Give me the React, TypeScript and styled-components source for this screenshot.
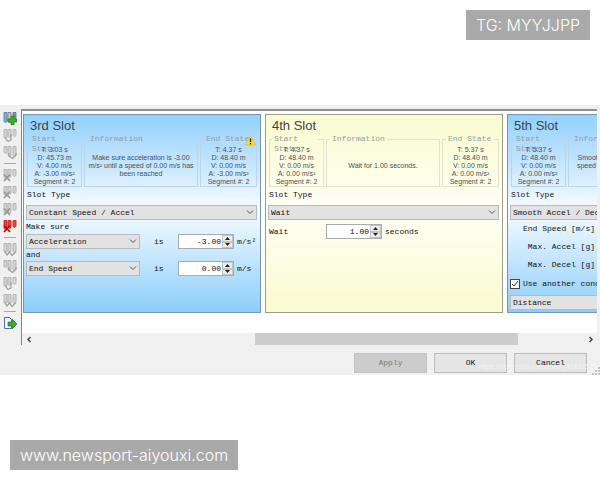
import React from "react";
import styled, { createGlobalStyle } from "styled-components";

const mono = `"Liberation Mono", monospace`;
const sans = `"Liberation Sans", Arial, sans-serif`;

const GlobalStyle = createGlobalStyle`
  * { box-sizing: border-box; }
  body { margin: 0; background: #fff; overflow-x: hidden; }
`;

type Tone = "blue" | "cream";

const Page = styled.main`
  min-height: 100vh;
  display: flex;
  flex-direction: column;
  font: 8px/10px ${mono};
  color: #111;
`;

const TagRow = styled.div<{ $end?: boolean }>`
  display: flex;
  justify-content: ${(p) => (p.$end ? "flex-end" : "flex-start")};
  padding: 10px;
`;

const Tag = styled.div`
  background: #a9a9a9;
  color: #fff;
  font: 300 16px/30px Inter, sans-serif;
  padding: 0 10px;
`;

const Dialog = styled.section`
  margin: 55px 0;
  padding: 4px 3px 0 0;
  background: #f0f0f0;
`;

const Body = styled.div`
  display: flex;
`;

const Toolbar = styled.nav`
  flex: none;
  width: 21px;
  display: flex;
  flex-direction: column;
  align-items: stretch;
`;

const ToolButton = styled.button`
  display: flex;
  align-items: center;
  justify-content: center;
  height: 17px;
  padding: 0 2px 0 0;
  border: 0;
  background: none;
`;

const Divider = styled.hr`
  width: 12px;
  height: 1px;
  margin: 3px 4px 2px;
  border: 0;
  background: #a8a8a8;
`;

const Panel = styled.div`
  flex: 1;
  min-width: 0;
  border-left: 1px solid #858585;
  border-top: 2px solid #929292;
  background: #fff;
`;

const Cards = styled.div`
  display: flex;
  gap: 4px;
  padding: 3px 0 20px 1px;
  overflow: hidden;
`;

const Card = styled.article<{ $tone: Tone }>`
  flex: none;
  width: 238px;
  height: 199px;
  padding: 3px 3px 0 2px;
  border: 1px solid ${(p) => (p.$tone === "blue" ? "#7496b0" : "#9a9b88")};
  background: ${(p) =>
    p.$tone === "blue"
      ? "linear-gradient(#93d1fd, #bfe3fd 22%, #f4faff 46%, #e9f6ff 55%, #b5dffc 80%, #8bcefb)"
      : "linear-gradient(#fafbd0, #fdfde2 25%, #fefef4 46%, #fefeec 60%, #fafbd0)"};
`;

const Title = styled.h2`
  margin: 0 0 0 4px;
  font: 13px/16px ${sans};
  color: #3a444b;
`;

const Groups = styled.div`
  display: grid;
  grid-template-columns: 55px 1fr 57px;
  gap: 2px;
  margin-left: 1px;
`;

const Group = styled.fieldset<{ $tone: Tone }>`
  position: relative;
  min-width: 0;
  height: 53px;
  margin: 0;
  padding: 0;
  border: 1px solid ${(p) => (p.$tone === "blue" ? "#b9d7e8" : "#e2e3cf")};
  font: 7px/8px ${sans};
  color: #46525a;
  text-align: center;
`;

const Legend = styled.legend`
  height: 10px;
  max-width: 46px;
  margin-left: 2px;
  padding: 0 2px;
  font: 8px/10px ${mono};
  color: #969d9c;
  text-align: left;
`;

const WideLegend = styled(Legend)`
  max-width: none;
  margin-left: 3px;
  white-space: nowrap;
`;

const Info = styled.div`
  display: flex;
  align-items: center;
  justify-content: center;
  height: 44px;
  padding: 0 3px;
  white-space: pre-line;
`;

const States = styled.div`
  padding-top: 2px;
  white-space: nowrap;
`;

const Warning = styled.svg`
  position: absolute;
  right: 0;
  top: -9px;
`;

const Caption = styled.div<{ $first?: boolean }>`
  height: ${(p) => (p.$first ? "14px" : "12px")};
  line-height: ${(p) => (p.$first ? "14px" : "12px")};
`;

const SlotLabel = styled.label`
  display: block;
  height: 18px;
  padding-left: 1px;
  line-height: 16px;
`;

const SelectWrap = styled.div<{ $short?: boolean }>`
  position: relative;
  width: ${(p) => (p.$short ? "114px" : "100%")};
  flex: none;

  select {
    display: block;
    width: 100%;
    height: 15px;
    padding: 0 14px 0 2px;
    appearance: none;
    border: 1px solid #b7bbbd;
    border-radius: 0;
    background: #e2e2e2;
    color: #111;
    font: 8px/12px ${mono};
  }

  svg {
    position: absolute;
    right: 3px;
    top: 5px;
    pointer-events: none;
  }
`;

const Row = styled.div`
  display: flex;
  align-items: center;
`;

const Is = styled.span`
  margin-left: 14px;
  width: 24px;
`;

const WaitRow = styled(Row)`
  margin-top: 4px;
  padding-left: 1px;

  label {
    width: 57px;
  }
`;

const Spin = styled.div`
  display: flex;
  width: 56px;
  height: 15px;
  border: 1px solid #a5adb2;
  background: #fff;
  margin-right: 3px;

  input {
    flex: 1;
    min-width: 0;
    padding: 0 1px;
    border: 0;
    background: none;
    text-align: right;
    color: #111;
    font: 8px/10px ${mono};
  }
`;

const Arrows = styled.div`
  display: flex;
  flex-direction: column;
  width: 11px;

  button {
    flex: 1;
    display: flex;
    align-items: center;
    justify-content: center;
    padding: 0;
    min-height: 0;
    border: 1px solid #c4c4c4;
    background: #ececec;
  }
`;

const Params = styled.div`
  display: grid;
  grid-auto-rows: 18px;
  grid-template-columns: 85px 1fr;
  align-items: center;
  column-gap: 6px;
  text-align: right;
  white-space: nowrap;

  input {
    width: 56px;
    height: 15px;
    border: 1px solid #a5adb2;
    font: 8px/10px ${mono};
  }
`;

const Check = styled.label`
  display: flex;
  align-items: center;
  gap: 3px;
  height: 15px;
  margin: 2px 0 4px;
  white-space: nowrap;

  input {
    appearance: none;
    width: 10px;
    height: 10px;
    margin: 0;
    border: 1px solid #444;
    background: #fff;
  }

  span {
    position: relative;
    display: flex;
  }

  svg {
    position: absolute;
    inset: 0;
    pointer-events: none;
  }
`;

const ScrollBar = styled.div`
  display: flex;
  height: 12px;
  background: #f0f0f0;

  button {
    width: 13px;
    padding: 0;
    border: 0;
    background: none;
    display: flex;
    align-items: center;
    justify-content: center;
  }
`;

const Track = styled.div`
  flex: 1;
`;

const Thumb = styled.div`
  width: 48%;
  height: 100%;
  margin-left: 40%;
  background: #cdcdcd;
`;

const Footer = styled.footer`
  position: relative;
  display: flex;
  justify-content: flex-end;
  gap: 7px;
  padding: 8px 10px 2px;
`;

const Action = styled.button`
  width: 73px;
  height: 20px;
  padding: 0;
  border: 1px solid #bcbcbc;
  background: #e5e5e5;
  font: 8px/10px ${mono};
  color: #111;

  &:disabled {
    border-color: #c3c3c3;
    background: #cccccc;
    color: #777;
  }
`;

const Watermark = styled.span`
  position: absolute;
  right: 0;
  bottom: 3px;
  font: 7px/10px ${sans};
  color: rgba(255, 255, 255, 0.55);
  pointer-events: none;
`;

const Grip = styled.svg`
  position: absolute;
  right: -3px;
  bottom: 0;
`;

type Mark = "add" | "left" | "right" | "cut" | "remove" | "all";

function SlotIcon({ mark, shape }: { mark: Mark; shape: number }) {
  const red = mark === "remove";
  const active = mark === "add";
  const fill = red ? "#f04444" : "#d6d6d6";
  const stroke = red ? "#c41c1c" : "#a9a9a9";
  const tall = [[9, 9, 6], [6, 9, 9], [8, 7, 6], [8, 8, 8]][shape];
  const colors = active ? ["#86add9", "#ead171", "#6f94cb"] : [fill, fill, fill];
  return (
    <svg width="14" height="14" viewBox="0 0 14 14" aria-hidden="true">
      {[1, 5, 10].map((x, i) => (
        <path key={x} d={`M${x} 1.500h3v${tall[i]}l-1.500 1-1.500-1z`} fill={colors[i]} stroke={active ? "#59729a" : stroke} strokeWidth=".8" />
      ))}
      {active && <path d="M8 5h3v3h3v3h-3v3H8v-3H5V8h3z" fill="#37b52f" stroke="#167818" strokeWidth=".7" />}
      {(mark === "cut" || red) && (
        <path d="M1 6.500l6 6.500M7 6.500l-6 6.500" stroke={red ? "#b30d0d" : "#979797"} strokeWidth="1.700" />
      )}
      {mark === "left" && <path d="M8 6v6l-3 1.500L2 9.500" fill="none" stroke="#9b9b9b" strokeWidth="1.200" />}
      {mark === "right" && <path d="M6 8v3l3.500 2.500L13 10V8" fill="none" stroke="#9b9b9b" strokeWidth="1.200" />}
      {mark === "all" && <path d="M1.500 9l2.500 4 2.500-3 2.500 3.500 4-4" fill="none" stroke="#9b9b9b" strokeWidth="1.200" />}
    </svg>
  );
}

function ExitIcon() {
  return (
    <svg width="14" height="14" viewBox="0 0 14 14" aria-hidden="true">
      <path d="M1.500 1.500h5l2 2v9h-7z" fill="#f5f9ff" stroke="#4a72b4" />
      <path d="M5 6h4V3l5 5-5 5v-3H5z" fill="#3da63a" stroke="#237925" strokeWidth=".7" />
    </svg>
  );
}

const tools: { name: string; mark: Mark; shape: number }[][] = [
  [
    { name: "Add slot", mark: "add", shape: 0 },
    { name: "Insert before", mark: "left", shape: 2 },
    { name: "Insert after", mark: "right", shape: 1 },
  ],
  [
    { name: "Remove first", mark: "cut", shape: 2 },
    { name: "Remove previous", mark: "cut", shape: 2 },
    { name: "Remove next", mark: "cut", shape: 0 },
    { name: "Remove all", mark: "remove", shape: 2 },
  ],
  [
    { name: "Copy all", mark: "all", shape: 3 },
    { name: "Copy after", mark: "right", shape: 1 },
    { name: "Copy before", mark: "left", shape: 2 },
    { name: "Paste", mark: "all", shape: 3 },
  ],
];

function Select({ id, value, label, short }: { id?: string; value: string; label?: string; short?: boolean }) {
  return (
    <SelectWrap $short={short}>
      <select id={id} aria-label={label} defaultValue={value}>
        <option>{value}</option>
      </select>
      <svg width="8" height="5" viewBox="0 0 8 5" aria-hidden="true">
        <path d="M1 .5l3 3 3-3" fill="none" stroke="#555" />
      </svg>
    </SelectWrap>
  );
}

function NumberBox({ id, value, label }: { id?: string; value: string; label?: string }) {
  return (
    <Spin>
      <input id={id} aria-label={label} defaultValue={value} />
      <Arrows>
        <button aria-label="Increase">
          <svg width="5" height="3"><path d="M0 3L2.500 0 5 3z" fill="#222" /></svg>
        </button>
        <button aria-label="Decrease">
          <svg width="5" height="3"><path d="M0 0L2.500 3 5 0z" fill="#222" /></svg>
        </button>
      </Arrows>
    </Spin>
  );
}

function StateGroup({ tone, name, lines, warn }: { tone: Tone; name: string; lines: string[]; warn?: boolean }) {
  const Heading = name === "End State" ? WideLegend : Legend;
  return (
    <Group $tone={tone}>
      <Heading>{name}</Heading>
      <States>
        {lines.map((line) => <div key={line}>{line}</div>)}
      </States>
      {warn && (
        <Warning width="11" height="11" viewBox="0 0 11 11" aria-label="Warning">
          <path d="M5.500 .5l5 9.500H.5z" fill="#ffdc36" stroke="#e5bb22" strokeWidth=".8" strokeLinejoin="round" />
          <path d="M5.500 3.500v3.500M5.500 8v1.200" stroke="#222" strokeWidth="1.300" />
        </Warning>
      )}
    </Group>
  );
}

interface SlotProps {
  id: string;
  title: string;
  tone: Tone;
  start: string[];
  info: string;
  end: string[];
  type: string;
  warn?: boolean;
  children: React.ReactNode;
}

function Slot({ id, title, tone, start, info, end, type, warn, children }: SlotProps) {
  return (
    <Card $tone={tone}>
      <Title>{title}</Title>
      <Groups>
        <StateGroup tone={tone} name="Start State" lines={start} />
        <Group $tone={tone}>
          <WideLegend>Information</WideLegend>
          <Info>{info}</Info>
        </Group>
        <StateGroup tone={tone} name="End State" lines={end} warn={warn} />
      </Groups>
      <SlotLabel htmlFor={id}>Slot Type</SlotLabel>
      <Select id={id} value={type} />
      {children}
    </Card>
  );
}

const state = (t: string, d: string, v: string, a: string) => [
  `T: ${t} s`, `D: ${d} m`, `V: ${v} m/s`, `A: ${a} m/s²`, "Segment #: 2",
];

export default function App() {
  return (
    <Page>
      <GlobalStyle />
      <TagRow $end><Tag>TG: MYYJJPP</Tag></TagRow>
      <Dialog>
        <Body>
          <Toolbar aria-label="Slots">
            {tools.map((group, i) => (
              <React.Fragment key={i}>
                {group.map((tool) => (
                  <ToolButton key={tool.name} aria-label={tool.name}>
                    <SlotIcon mark={tool.mark} shape={tool.shape} />
                  </ToolButton>
                ))}
                <Divider />
              </React.Fragment>
            ))}
            <ToolButton aria-label="Exit"><ExitIcon /></ToolButton>
          </Toolbar>
          <Panel>
            <Cards>
              <Slot id="slot3" title="3rd Slot" tone="blue" warn type="Constant Speed / Accel"
                start={state("3.03", "45.73", "4.00", "-3.00")}
                info="Make sure acceleration is -3.00 m/s² until a speed of 0.00 m/s has been reached"
                end={state("4.37", "48.40", "0.00", "-3.00")}>
                <Caption $first>Make sure</Caption>
                <Row>
                  <Select short label="First condition" value="Acceleration" />
                  <Is>is</Is>
                  <NumberBox label="Acceleration" value="-3.00" />
                  <span>m/s²</span>
                </Row>
                <Caption>and</Caption>
                <Row>
                  <Select short label="Second condition" value="End Speed" />
                  <Is>is</Is>
                  <NumberBox label="End speed" value="0.00" />
                  <span>m/s</span>
                </Row>
              </Slot>
              <Slot id="slot4" title="4th Slot" tone="cream" type="Wait"
                start={state("4.37", "48.40", "0.00", "0.00")}
                info="Wait for 1.00 seconds."
                end={state("5.37", "48.40", "0.00", "0.00")}>
                <WaitRow>
                  <label htmlFor="wait">Wait</label>
                  <NumberBox id="wait" value="1.00" />
                  <span>seconds</span>
                </WaitRow>
              </Slot>
              <Slot id="slot5" title="5th Slot" tone="blue" type="Smooth Accel / Decel"
                start={state("5.37", "48.40", "0.00", "0.00")}
                info={"Smooth acceleration to an end\nspeed of 0.00 m/s until another\ncondition is met"}
                end={state("6.37", "48.40", "0.00", "0.00")}>
                <Params>
                  <label htmlFor="speed">End Speed [m/s]</label><input id="speed" />
                  <label htmlFor="accel">Max. Accel [g]</label><input id="accel" />
                  <label htmlFor="decel">Max. Decel [g]</label><input id="decel" />
                </Params>
                <Check>
                  <span>
                    <input type="checkbox" defaultChecked />
                    <svg width="10" height="10" viewBox="0 0 10 10" aria-hidden="true">
                      <path d="M2 5l2 2 4-5" fill="none" stroke="#333" />
                    </svg>
                  </span>
                  Use another condition
                </Check>
                <Select label="Condition" value="Distance" />
              </Slot>
            </Cards>
            <ScrollBar>
              <button aria-label="Scroll left">
                <svg width="6" height="7"><path d="M4.500 1L2 3.500 4.500 6" fill="none" stroke="#444" strokeWidth="1.500" /></svg>
              </button>
              <Track><Thumb /></Track>
              <button aria-label="Scroll right">
                <svg width="6" height="7"><path d="M1.500 1L4 3.500 1.500 6" fill="none" stroke="#444" strokeWidth="1.500" /></svg>
              </button>
            </ScrollBar>
          </Panel>
        </Body>
        <Footer>
          <Action disabled>Apply</Action>
          <Action>OK</Action>
          <Action>Cancel</Action>
          <Watermark>https://blog.csdn.net/weixin_41811529</Watermark>
          <Grip width="8" height="8" aria-hidden="true">
            <path d="M6 0h2v2H6zM3 3h2v2H3zM6 3h2v2H6zM0 6h2v2H0zM3 6h2v2H3zM6 6h2v2H6z" fill="#c3c3c3" />
          </Grip>
        </Footer>
      </Dialog>
      <TagRow><Tag>www.newsport-aiyouxi.com</Tag></TagRow>
    </Page>
  );
}
